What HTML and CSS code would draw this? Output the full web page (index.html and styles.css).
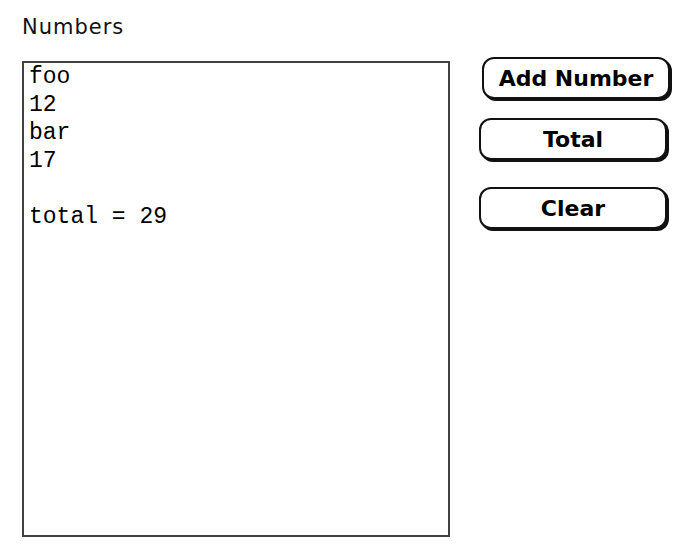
FILE: index.html
```html
<!DOCTYPE html>
<html lang="en">
<head>
  <meta charset="UTF-8" />
  <title>Numbers</title>
  <link rel="stylesheet" href="styles.css">
</head>
<body>
  <div class="app">
    <div class="list-column">
      <label class="list-label" for="numbers">Numbers</label>
      <textarea id="numbers" class="list-box" readonly>foo
12
bar
17

total = 29</textarea>
    </div>
    <div class="button-column">
      <button class="mac-button mac-button--default">Add Number</button>
      <button class="mac-button mac-button--total">Total</button>
      <button class="mac-button mac-button--clear">Clear</button>
    </div>
  </div>
</body>
</html>
```

FILE: styles.css
```css
* { margin: 0; padding: 0; box-sizing: border-box; }
body {
  background: #fff;
  color: #000;
  font-family: 'DejaVu Sans', sans-serif;
}

.app {
  display: flex;
  align-items: flex-start;
  padding: 15px 0 0 22px;
}

.list-column {
  display: flex;
  flex-direction: column;
}

.list-label {
  font-size: 21px;
  line-height: 24px;
  letter-spacing: 1px;
  color: #111;
}

.list-box {
  margin-top: 22px;
  width: 428px;
  height: 476px;
  border: 2px solid #404040;
  padding: 0 5px;
  font-family: 'Liberation Mono', monospace;
  font-size: 23px;
  line-height: 28px;
  color: #000;
  background: #fff;
  resize: none;
  outline: none;
  overflow: hidden;
}

.button-column {
  display: flex;
  flex-direction: column;
  align-items: flex-start;
  padding: 42px 0 0 29px;
}

.mac-button {
  display: flex;
  align-items: center;
  justify-content: center;
  width: 188px;
  height: 42px;
  border: 2px solid #111;
  border-radius: 12px;
  box-shadow: 2px 2px 0 #111;
  background: #fff;
  font-family: 'DejaVu Sans', sans-serif;
  font-weight: bold;
  font-size: 22px;
  color: #000;
  cursor: pointer;
}

.mac-button--default { margin-left: 3px; }
.mac-button--total { margin-top: 19px; }
.mac-button--clear { margin-top: 27px; }
```
